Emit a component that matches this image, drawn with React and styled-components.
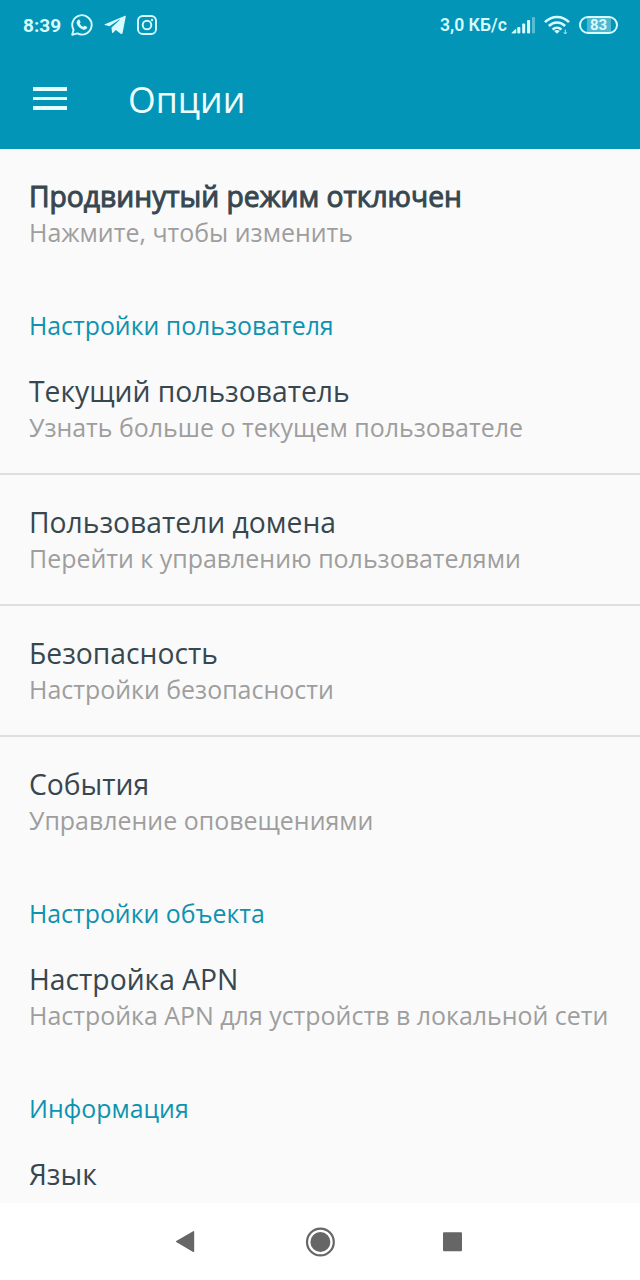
import React from 'react';
import styled, { createGlobalStyle } from 'styled-components';

const GlobalStyle = createGlobalStyle`
  * {
    box-sizing: border-box;
  }

  body {
    margin: 0;
    background: #fafafa;
    font-family: 'Open Sans', 'Noto Sans', sans-serif;
  }
`;

const Screen = styled.div`
  display: flex;
  flex-direction: column;
  width: 640px;
  height: 1280px;
  overflow: hidden;
  background: #fafafa;
`;

const Header = styled.header`
  flex: none;
  height: 149px;
  background: #0295b7;
  color: #f0ffff;
`;

const StatusBar = styled.div`
  display: flex;
  align-items: center;
  justify-content: space-between;
  height: 50px;
  padding: 0 22px 0 23px;
  font-family: Roboto, sans-serif;
  color: #d8fbff;
`;

const StatusGroup = styled.div`
  display: flex;
  align-items: center;
`;

const Clock = styled.span`
  width: 48px;
  padding-top: 2px;
  font-size: 19px;
  font-weight: 700;
  line-height: 24px;
`;

const Speed = styled.span`
  width: 70px;
  font-size: 17.6px;
  font-weight: 600;
  line-height: 24px;
  white-space: nowrap;
`;

const StatusIcon = styled.svg`
  display: block;
  flex: none;
  margin-right: ${({ $gap }) => $gap || 0}px;
`;

const Battery = styled.div`
  display: flex;
  align-items: center;
  justify-content: center;
  width: 39px;
  height: 18px;
  margin-top: -1px;
  border: 2px solid #d8fbff;
  border-radius: 9px;
  background: linear-gradient(90deg, #0295b7 6px, #4fb8d0 6px, #4fb8d0 30px, #0295b7 30px);
  font-size: 15px;
  font-weight: 700;
  line-height: 14px;
`;

const Toolbar = styled.div`
  display: flex;
  align-items: center;
  height: 99px;
  padding-left: 33px;
`;

const MenuButton = styled.button`
  display: flex;
  flex-direction: column;
  justify-content: space-between;
  width: 34px;
  height: 23px;
  margin: -2px 61px 0 0;
  padding: 0;
  border: 0;
  background: none;
`;

const MenuLine = styled.span`
  height: ${({ $thin }) => ($thin ? 3 : 4)}px;
  background: #e6ffff;
`;

const ToolbarTitle = styled.h1`
  margin: -2px 0 0;
  font-size: 35.6px;
  font-weight: 400;
  line-height: 48px;
`;

const List = styled.main`
  flex: 1;
  min-height: 0;
  overflow: hidden;
`;

const SectionTitle = styled.h2`
  height: 66px;
  margin: 0;
  padding: 29px 29px 0;
  color: #0d93b0;
  font-size: 24.85px;
  font-weight: 400;
  line-height: 36px;
`;

const Row = styled.div`
  height: ${({ $divider }) => ($divider ? 131 : 129)}px;
  padding: 29px 0 0 29px;
  border-bottom: ${({ $divider }) => ($divider ? '2px solid #dfdfdf' : '0')};
  white-space: nowrap;
`;

const RowTitle = styled.div`
  color: #37474f;
  font-size: 28.25px;
  line-height: 36px;
  -webkit-text-stroke: ${({ $strong }) => ($strong ? '1px #37474f' : '0')};
`;

const RowText = styled.div`
  color: #9e9e9e;
  font-size: 24.94px;
  line-height: 36px;
`;

const NavBar = styled.nav`
  display: flex;
  flex: none;
  align-items: center;
  justify-content: center;
  gap: 102px;
  height: 77px;
  background: #fff;
`;

const NavButton = styled.button`
  display: flex;
  width: 32px;
  height: 32px;
  padding: 0;
  border: 0;
  background: none;
`;

const sections = [
  {
    rows: [
      { title: 'Продвинутый режим отключен', text: 'Нажмите, чтобы изменить', strong: true }
    ]
  },
  {
    title: 'Настройки пользователя',
    rows: [
      { title: 'Текущий пользователь', text: 'Узнать больше о текущем пользователе' },
      { title: 'Пользователи домена', text: 'Перейти к управлению пользователями' },
      { title: 'Безопасность', text: 'Настройки безопасности' },
      { title: 'События', text: 'Управление оповещениями' }
    ]
  },
  {
    title: 'Настройки объекта',
    rows: [{ title: 'Настройка APN', text: 'Настройка APN для устройств в локальной сети' }]
  },
  {
    title: 'Информация',
    rows: [{ title: 'Язык' }]
  }
];

const WhatsAppIcon = () => (
  <StatusIcon $gap={11} width="22" height="22" viewBox="0 0 22 22" fill="none">
    <path
      d="M1.2 20.8 2.6 15.8A9.7 9.7 0 1 1 6.3 19.4Z"
      stroke="currentColor"
      strokeWidth="1.9"
      strokeLinejoin="round"
    />
    <path
      d="M7.1 5.9c.6-.6 1.3-.4 1.6.2l.8 1.8c.2.5-.8 1.3-.7 1.7.6 1.4 1.8 2.6 3.3 3.2.5.2 1.2-1.2 1.7-1l1.9 1c.7.4.6 1.2.1 1.8-1.1 1.4-2.8 1.4-4.5.6-2.7-1.2-4.6-3.1-5.5-5.5-.5-1.5 0-2.8 1.3-3.8Z"
      fill="currentColor"
    />
  </StatusIcon>
);

const TelegramIcon = () => (
  <StatusIcon $gap={11} width="22" height="20" viewBox="0 0 22 20">
    <path
      d="M.8 9.2 20.5.9c.9-.3 1.4.1 1.2 1.2l-3.1 15.8c-.2 1.1-1 1.4-1.9.8l-4.9-3.6-2.6 2.6c-.5.5-1.1.3-1.2-.4l-.5-4.9 8.2-7.4c.4-.4 0-.6-.5-.3L5.4 11.3.8 9.9c-.5-.2-.5-.5 0-.7Z"
      fill="currentColor"
    />
  </StatusIcon>
);

const InstagramIcon = () => (
  <StatusIcon width="20" height="20" viewBox="0 0 20 20" fill="none" stroke="currentColor">
    <rect x="1" y="1" width="18" height="18" rx="4.8" strokeWidth="1.9" />
    <circle cx="10" cy="10" r="4.3" strokeWidth="1.9" />
    <circle cx="15" cy="5" r="1.2" fill="currentColor" stroke="none" />
  </StatusIcon>
);

const SignalIcon = () => (
  <StatusIcon $gap={8} width="26" height="18" viewBox="0 0 26 18" fill="currentColor">
    <path d="M1.8 17 5.8 13.2V17Z" stroke="currentColor" strokeWidth=".8" strokeLinejoin="round" />
    <rect x="7.3" y="11" width="3" height="6.4" rx=".8" />
    <rect x="12.2" y="7.5" width="3" height="9.9" rx=".8" />
    <rect x="17" y="4" width="3.1" height="13.4" rx=".8" />
    <rect x="22" y="1" width="3" height="16.4" rx=".8" opacity=".4" />
  </StatusIcon>
);

const WifiIcon = () => (
  <StatusIcon $gap={9} width="26" height="20" viewBox="0 0 26 20" fill="none">
    <g stroke="currentColor" strokeWidth="2.6">
      <path d="M1 7.2c6.7-6.9 17.3-6.9 24 0" />
      <path d="M4.9 11c4.6-4.6 11.6-4.6 16.2 0" />
      <path d="M8.6 14.6c2.5-2.5 6.3-2.5 8.8 0" />
    </g>
    <path d="M10.2 16c1.6-1.5 4-1.5 5.6 0L13 18.8Z" fill="currentColor" />
    <path d="M21.3 14.6v4.2m-1.6-1.5 1.6 1.7 1.6-1.7" stroke="currentColor" strokeWidth="1" opacity=".8" />
  </StatusIcon>
);

const App = () => {
  const renderRows = (rows) =>
    rows.map((row, i) => (
      <Row key={row.title} $divider={i < rows.length - 1}>
        <RowTitle $strong={row.strong}>{row.title}</RowTitle>
        {row.text && <RowText>{row.text}</RowText>}
      </Row>
    ));

  return (
    <Screen>
      <GlobalStyle />
      <Header>
        <StatusBar>
          <StatusGroup>
            <Clock>8:39</Clock>
            <WhatsAppIcon />
            <TelegramIcon />
            <InstagramIcon />
          </StatusGroup>
          <StatusGroup>
            <Speed>3,0 КБ/с</Speed>
            <SignalIcon />
            <WifiIcon />
            <Battery>83</Battery>
          </StatusGroup>
        </StatusBar>
        <Toolbar>
          <MenuButton aria-label="Меню">
            <MenuLine />
            <MenuLine $thin />
            <MenuLine />
          </MenuButton>
          <ToolbarTitle>Опции</ToolbarTitle>
        </Toolbar>
      </Header>

      <List>
        {sections.map((section, i) => (
          <section key={i}>
            {section.title && <SectionTitle>{section.title}</SectionTitle>}
            {renderRows(section.rows)}
          </section>
        ))}
      </List>

      <NavBar>
        <NavButton aria-label="Назад">
          <svg width="32" height="32" viewBox="0 0 32 32">
            <path d="M6.6 15.5 23.5 5.8v19.6Z" fill="#666" stroke="#666" strokeWidth="1.4" strokeLinejoin="round" />
          </svg>
        </NavButton>
        <NavButton aria-label="Домой">
          <svg width="32" height="32" viewBox="0 0 32 32">
            <circle cx="16.4" cy="16" r="13.4" fill="none" stroke="#666" strokeWidth="2.2" />
            <circle cx="16.4" cy="16" r="10" fill="#666" />
          </svg>
        </NavButton>
        <NavButton aria-label="Недавние">
          <svg width="32" height="32" viewBox="0 0 32 32">
            <rect x="5" y="6.3" width="19" height="19" rx="1" fill="#666" />
          </svg>
        </NavButton>
      </NavBar>
    </Screen>
  );
};

export default App;
